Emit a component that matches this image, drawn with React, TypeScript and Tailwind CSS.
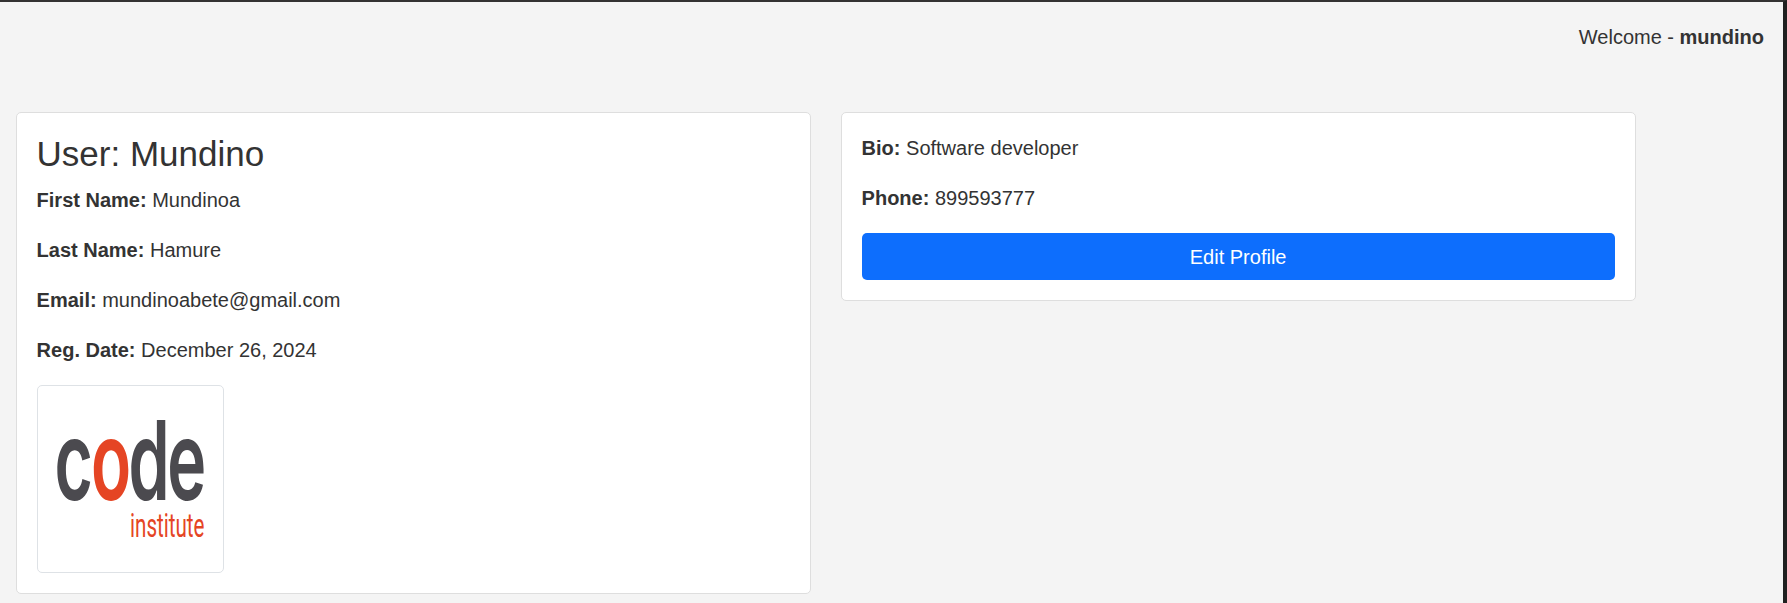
import React from "react";

function Field({ label, value }: { label: string; value: string }) {
  return (
    <p className="mb-5">
      <b>{label}:</b> {value}
    </p>
  );
}

function Logo() {
  return (
    <div className="h-[188px] w-[187px] overflow-hidden rounded-[5px] border border-[#dee2e6] bg-white">
      <svg
        viewBox="1 1 185 186"
        className="h-full w-full"
        fontFamily="Inter, sans-serif"
        fontSize="100"
        fontWeight="600"
        fill="#4b4a4f"
      >
        <text transform="translate(0 114.5) scale(.66 1.1)">
          <tspan x="26.5">c</tspan>
          <tspan x="82" fill="#e54524">o</tspan>
          <tspan x="138.5">d</tspan>
          <tspan x="197.5">e</tspan>
        </text>
        <text
          transform="translate(93 152) scale(1 1.6)"
          fontFamily="Roboto, sans-serif"
          fontSize="21"
          fontWeight="400"
          fill="#e54524"
          textLength="74.5"
          lengthAdjust="spacingAndGlyphs"
        >
          institute
        </text>
      </svg>
    </div>
  );
}

export default function App() {
  return (
    <div className="h-[603px] overflow-hidden border-t-2 border-r-4 border-t-[#333232] border-r-[#202020] bg-[#f4f4f4] font-['Liberation_Sans',sans-serif] text-[20px] leading-[30px] text-[#333]">
      <header className="flex h-[110px] justify-end pt-5 pr-[19px]">
        <p>
          Welcome - <b>mundino</b>
        </p>
      </header>
      <main className="flex items-start gap-[30px] pl-[15.6px]">
        <section className="w-[795px] rounded-[5px] border border-[#dedede] bg-white p-5">
          <h3 className="mb-[10px] text-[35px] leading-[42px]">User: Mundino</h3>
          <Field label="First Name" value="Mundinoa" />
          <Field label="Last Name" value="Hamure" />
          <Field label="Email" value="mundinoabete@gmail.com" />
          <Field label="Reg. Date" value="December 26, 2024" />
          <Logo />
        </section>
        <section className="w-[795px] rounded-[5px] border border-[#dedede] bg-white p-5">
          <Field label="Bio" value="Software developer" />
          <Field label="Phone" value="899593777" />
          <button className="h-[47px] w-full rounded-[5px] bg-[#0d6efd] text-white">
            Edit Profile
          </button>
        </section>
      </main>
    </div>
  );
}
